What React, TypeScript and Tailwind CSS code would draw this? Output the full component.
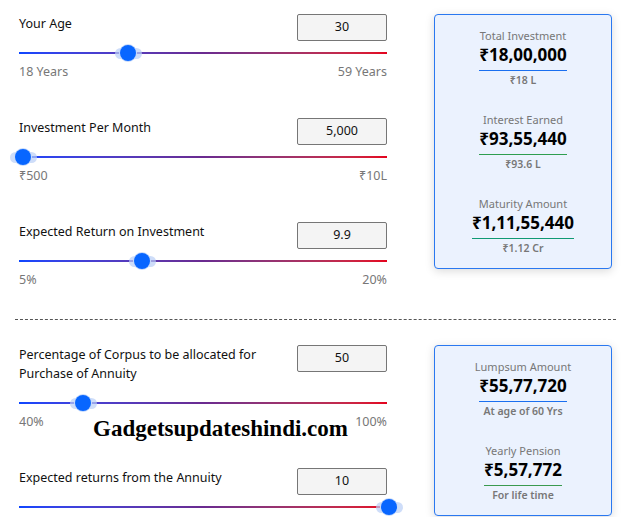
import React from 'react';

type Slider = {
  label: string;
  value: string;
  min?: string;
  max?: string;
  thumb: number; // px offset of thumb centre from track start
};

const topSliders: Slider[] = [
  { label: 'Your Age', value: '30', min: '18 Years', max: '59 Years', thumb: 109 },
  { label: 'Investment Per Month', value: '5,000', min: '₹500', max: '₹10L', thumb: 4 },
  { label: 'Expected Return on Investment', value: '9.9', min: '5%', max: '20%', thumb: 123 },
];

const bottomSliders: Slider[] = [
  { label: 'Percentage of Corpus to be allocated for Purchase of Annuity', value: '50', min: '40%', max: '100%', thumb: 64 },
  { label: 'Expected returns from the Annuity', value: '10', thumb: 370 },
];

type Stat = { title: string; value: string; sub: string; line: string };

const topStats: Stat[] = [
  { title: 'Total Investment', value: '₹18,00,000', sub: '₹18 L', line: 'border-[#1a6ff0]' },
  { title: 'Interest Earned', value: '₹93,55,440', sub: '₹93.6 L', line: 'border-[#2f9e4f]' },
  { title: 'Maturity Amount', value: '₹1,11,55,440', sub: '₹1.12 Cr', line: 'border-[#109a74]' },
];

const bottomStats: Stat[] = [
  { title: 'Lumpsum Amount', value: '₹55,77,720', sub: 'At age of 60 Yrs', line: 'border-[#1a6ff0]' },
  { title: 'Yearly Pension', value: '₹5,57,772', sub: 'For life time', line: 'border-[#3a9a4f]' },
];

const SliderRow = ({ s }: { s: Slider }) => (
  <div className="flex flex-col">
    <div className="flex justify-between items-start">
      <div className="w-[250px] text-[12.5px] leading-[19px] pb-2 text-[#111]">{s.label}</div>
      <div className="w-[90px] h-[27px] border border-[#767676] bg-[#f4f4f4] rounded-[2px] flex items-center justify-center text-[12.5px] text-[#111]">
        {s.value}
      </div>
    </div>
    <div className="relative h-4 mt-1">
      <div className="absolute left-0 right-0 top-[7px] h-[2px] bg-linear-to-r from-[#0a46ff] via-[#6a2a90] to-[#e4001c]" />
      <div
        className="absolute top-1/2 -translate-x-1/2 -translate-y-1/2 flex items-center justify-center"
        style={{ left: s.thumb }}
      >
        <div className="absolute w-[27px] h-[11px] rounded-full bg-[#b9cff7]/70" />
        <div className="relative w-[16px] h-[16px] rounded-full bg-[#0866ff] ring-1 ring-[#c7dafb]" />
      </div>
    </div>
    {s.min && (
      <div className="flex justify-between text-[12.5px] leading-4 text-[#777] mt-[3px]">
        <span>{s.min}</span>
        <span>{s.max}</span>
      </div>
    )}
  </div>
);

const StatCard = ({ stats }: { stats: Stat[] }) => (
  <div className="self-start w-[178px] border border-[#2a78f0] rounded-[4px] bg-[#ebf2fe] shadow-[0_2px_10px_rgba(0,0,0,0.15)] pt-[14px] pb-[13px] flex flex-col gap-[26px]">
    {stats.map((st) => (
      <div key={st.title} className="flex flex-col items-center">
        <div className="text-[11px] leading-[14px] text-[#777]">{st.title}</div>
        <div className={`mt-[1px] pb-[4px] border-b ${st.line} text-[17px] leading-[22px] font-bold text-black`}>
          {st.value}
        </div>
        <div className="mt-[2px] text-[10.5px] leading-[14px] font-semibold text-[#777]">{st.sub}</div>
      </div>
    ))}
  </div>
);

export default function App() {
  return (
    <div className="w-[631px] h-[517px] overflow-hidden bg-white font-['Noto_Sans',sans-serif]">
      <div className="flex gap-[47px] pl-[19px] pt-[14px]">
        <div className="w-[368px] flex flex-col gap-[38px]">
          {topSliders.map((s) => (
            <SliderRow key={s.label} s={s} />
          ))}
        </div>
        <StatCard stats={topStats} />
      </div>

      <div className="mx-[15px] w-[601px] mt-[31px] border-t border-dashed border-[#555]" />

      <div className="relative flex gap-[47px] pl-[19px] pt-[25px]">
        <div className="w-[368px] flex flex-col gap-[38px]">
          {bottomSliders.map((s) => (
            <SliderRow key={s.label} s={s} />
          ))}
        </div>
        <StatCard stats={bottomStats} />
        <div className="absolute left-[93px] top-[95px] font-['Liberation_Serif',serif] font-bold text-[23px] leading-[28px] text-black">
          Gadgetsupdateshindi.com
        </div>
      </div>
    </div>
  );
}
